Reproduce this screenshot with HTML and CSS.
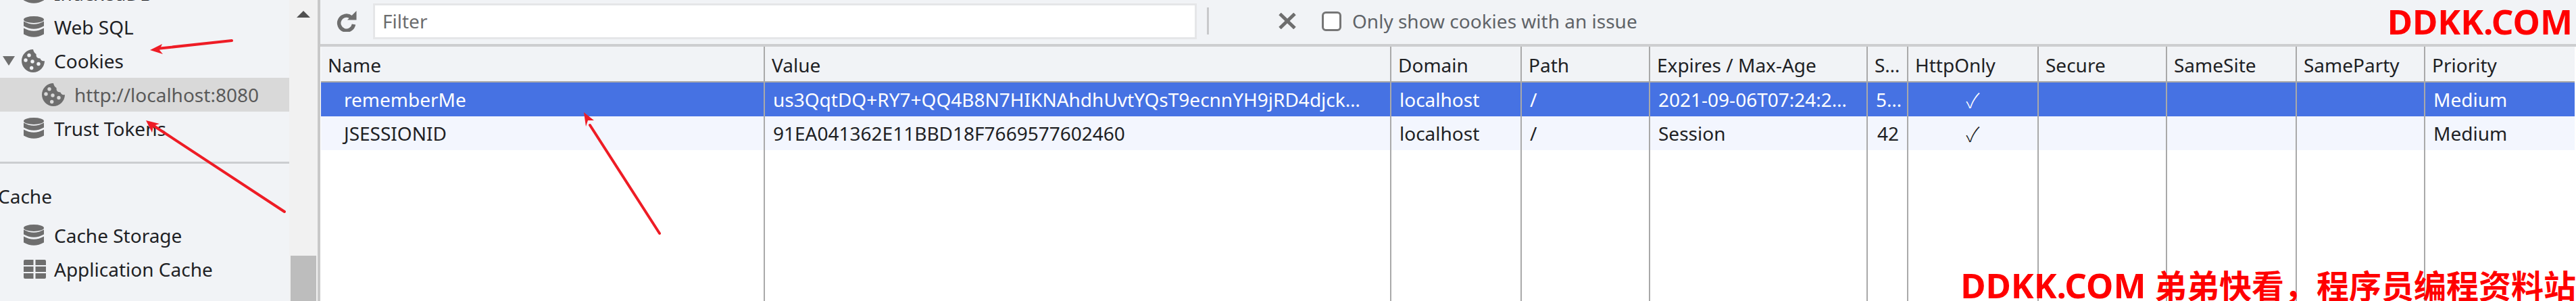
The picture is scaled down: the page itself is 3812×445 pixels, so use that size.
FILE: index.html
```html
<!DOCTYPE html>
<html lang="en">
<head>
<meta charset="utf-8">
<title>Cookies</title>
<link rel="stylesheet" href="styles.css">
</head>
<body>
<svg class="defs" width="0" height="0" aria-hidden="true">
  <symbol id="db" viewBox="0 0 30 32">
    <ellipse cx="15" cy="5" rx="15" ry="5"/>
    <path d="M0 7.500Q15 16 30 7.500V14.500Q15 23 0 14.500Z"/>
    <path d="M0 17.500Q15 26 30 17.500V26.500Q15 35 0 26.500Z"/>
  </symbol>
  <symbol id="cookie" viewBox="0 0 34 34">
    <path fill-rule="evenodd" d="M17 0A17 17 0 1 0 34 17Q29 18 27.500 13.500Q21 13.500 21.500 7Q18 5 17 0ZM11 6A2.700 2.700 0 1 1 11 11.400A2.700 2.700 0 1 1 11 6ZM6 13.300A2.700 2.700 0 1 1 6 18.700A2.700 2.700 0 1 1 6 13.300ZM16 15.300A2.700 2.700 0 1 1 16 20.700A2.700 2.700 0 1 1 16 15.300ZM25 18.800A2.700 2.700 0 1 1 25 24.200A2.700 2.700 0 1 1 25 18.800ZM14.700 24.800A2.700 2.700 0 1 1 14.700 30.200A2.700 2.700 0 1 1 14.700 24.800Z"/>
  </symbol>
  <symbol id="grid" viewBox="0 0 33 28">
    <path d="M2 0H14.500V8H0V2Q0 0 2 0ZM17.500 0H31Q33 0 33 2V8H17.500ZM0 10H14.500V18H0ZM17.500 10H33V18H17.500ZM0 20H14.500V28H2Q0 28 0 26ZM17.500 20H33V26Q33 28 31 28H17.500Z"/>
  </symbol>
</svg>

<div class="app">
  <aside class="sidebar">
    <div class="tree">
      <div class="row"><svg class="ic ic-db"><use href="#db"/></svg><span>IndexedDB</span></div>
      <div class="row"><svg class="ic ic-db"><use href="#db"/></svg><span>Web SQL</span></div>
      <div class="row row-open">
        <span class="twist"></span>
        <svg class="ic ic-cookie"><use href="#cookie"/></svg><span>Cookies</span>
      </div>
      <div class="row row-sel"><svg class="ic ic-cookie"><use href="#cookie"/></svg><span>http://localhost:8080</span></div>
      <div class="row"><svg class="ic ic-db"><use href="#db"/></svg><span>Trust Tokens</span></div>
    </div>
    <div class="divider"></div>
    <div class="section">Cache</div>
    <div class="row"><svg class="ic ic-db"><use href="#db"/></svg><span>Cache Storage</span></div>
    <div class="row"><svg class="ic ic-grid"><use href="#grid"/></svg><span>Application Cache</span></div>
  </aside>

  <div class="scrollbar">
    <span class="scroll-up"></span>
    <span class="scroll-thumb"></span>
  </div>

  <main class="main">
    <div class="toolbar">
      <svg class="reload" viewBox="0 0 30 31" aria-hidden="true">
        <path class="reload-arc" d="M21.500 9.500A11 11 0 1 0 25.500 20"/>
        <path class="reload-head" d="M29.500 0V13.500H16Z"/>
      </svg>
      <input class="filter" type="text" placeholder="Filter">
      <span class="tool-sep"></span>
      <svg class="clear" viewBox="0 0 26 24" aria-hidden="true"><path d="M2 1.500L24 22.500M24 1.500L2 22.500"/></svg>
      <label class="issue"><input type="checkbox"><span>Only show cookies with an issue</span></label>
    </div>
    <div class="table">
      <div class="tr th">
        <div class="td">Name</div><div class="td">Value</div><div class="td">Domain</div><div class="td">Path</div><div class="td">Expires / Max-Age</div><div class="td">S…</div><div class="td">HttpOnly</div><div class="td">Secure</div><div class="td">SameSite</div><div class="td">SameParty</div><div class="td">Priority</div>
      </div>
      <div class="tr selected">
        <div class="td td-name">rememberMe</div><div class="td">us3QqtDQ+RY7+QQ4B8N7HIKNAhdhUvtYQsT9ecnnYH9jRD4djck…</div><div class="td">localhost</div><div class="td">/</div><div class="td">2021-09-06T07:24:2…</div><div class="td">5…</div><div class="td td-check">✓</div><div class="td"></div><div class="td"></div><div class="td"></div><div class="td">Medium</div>
      </div>
      <div class="tr alt">
        <div class="td td-name">JSESSIONID</div><div class="td">91EA041362E11BBD18F7669577602460</div><div class="td">localhost</div><div class="td">/</div><div class="td">Session</div><div class="td td-num">42</div><div class="td td-check">✓</div><div class="td"></div><div class="td"></div><div class="td"></div><div class="td">Medium</div>
      </div>
      <div class="tr filler">
        <div class="td"></div><div class="td"></div><div class="td"></div><div class="td"></div><div class="td"></div><div class="td"></div><div class="td"></div><div class="td"></div><div class="td"></div><div class="td"></div><div class="td"></div>
      </div>
    </div>
  </main>
</div>

<svg class="arrows" viewBox="0 0 3812 445" aria-hidden="true">
  <g class="arrow-line">
    <path d="M343 60L232 72"/>
    <path d="M421 313L226 185"/>
    <path d="M976 345L873 185"/>
  </g>
  <path class="arrow-head" d="M222 74L240 65L236 74L241 80Z"/>
  <path class="arrow-head" d="M216 178L236 183L227 186L225 196Z"/>
  <path class="arrow-head" d="M864 166L879 178L870 178L867 187Z"/>
</svg>
<div class="mark mark-top">DDKK.COM</div>
<div class="mark mark-bottom"><span class="mark-latin">DDKK.COM</span> 弟弟快看，程序员编程资料站</div>
</body>
</html>
```

FILE: styles.css
```css
* { box-sizing: border-box; }
html, body { margin: 0; height: 445px; overflow: hidden; background: #fff; }
body {
  position: relative;
  font-family: "Noto Sans", "Open Sans", sans-serif;
  font-size: 28px;
  color: #202124;
}
.defs { position: absolute; }

.app { display: flex; width: 3812px; height: 445px; }

/* sidebar */
.sidebar { width: 428px; height: 445px; flex: none; background: #f1f3f6; overflow: hidden; }
.tree { margin-top: -35px; }
.row { display: flex; align-items: center; height: 50px; padding-left: 35px; white-space: nowrap; }
.row > span:last-child { margin-left: 15px; }
.row-open { position: relative; padding-left: 32px; }
.row-open > span:last-child { margin-left: 14px; }
.twist {
  position: absolute; left: 4px; top: 18px;
  border-style: solid; border-width: 14px 9.5px 0; border-color: #6e6e6e transparent transparent;
}
.row-sel { background: #d9d9d9; color: #5a5a5a; padding-left: 62px; }
.row-sel > span:last-child { margin-left: 14px; }
.ic { flex: none; fill: #6e6e6e; display: block; }
.ic-db { width: 30px; height: 32px; }
.ic-cookie { width: 34px; height: 34px; }
.ic-grid { width: 33px; height: 28px; }
.row .ic-grid + span { margin-left: 12px; }
.divider { height: 3px; margin-top: 24px; background: #cbcdd0; }
.section { height: 50px; margin-top: 23px; margin-left: -3px; line-height: 50px; }
.section + .row { margin-top: 8px; }

/* scrollbar */
.scrollbar { position: relative; width: 42px; flex: none; height: 445px; background: #f1f1f1; }
.scroll-up {
  position: absolute; left: 11px; top: 16px;
  border-style: solid; border-width: 0 10px 10px; border-color: transparent transparent #505050;
}
.scroll-thumb { position: absolute; left: 2px; top: 378px; width: 38px; height: 67px; background: #bdbdbd; }

/* main */
.main { flex: 1; min-width: 0; height: 445px; border-left: 4px solid #c8c8c8; display: flex; flex-direction: column; }
.toolbar {
  display: flex; align-items: center; height: 69px; flex: none;
  background: #f1f3f6; border-bottom: 4px solid #cdced0;
  padding-bottom: 3px;
}
.reload { width: 30px; height: 31px; margin-left: 24px; flex: none; }
.reload-arc { fill: none; stroke: #6e6e6e; stroke-width: 5.500px; }
.reload-head { fill: #6e6e6e; }
.filter {
  width: 1219px; height: 53px; margin-left: 24px; flex: none;
  border: 3px solid #e5e6e8; background: #fff; padding: 0 11px;
  font: inherit; color: #202124; outline: 0;
}
.filter::placeholder { color: #6b6c6e; opacity: 1; }
.tool-sep { width: 3px; height: 40px; margin-left: 15px; background: #c8c9cb; flex: none; }
.clear { width: 26px; height: 24px; margin-left: 103px; flex: none; fill: none; stroke: #6e6e6e; stroke-width: 5px; }
.issue { display: flex; align-items: center; margin-left: 38px; color: #5f6368; white-space: nowrap; }
.issue input {
  appearance: none; width: 29px; height: 29px; margin: 0 16px 0 0;
  background: #fff; border: 3px solid #767676; border-radius: 6px;
}

/* table */
.table { flex: 1; min-height: 0; display: flex; flex-direction: column; margin-left: 1px; width: 3335px; }
.tr {
  display: grid; flex: none;
  grid-template-columns: 657px 927px 193px 190px 322px 60px 193px 190px 192px 190px 221px;
  height: 50px;
}
.td {
  min-width: 0; padding: 0 12px; line-height: 50px; white-space: nowrap;
  border-right: 2px solid #a9a9a9;
}
.td:last-child { border-right: 0; }
.th { height: 53px; background: #f1f3f6; border-bottom: 2px solid #a9a9a9; }
.th .td { line-height: 54px; padding-left: 10px; }
.selected { background: #4672e3; color: #fff; }
.alt { background: #f3f6fe; }
.td-name { padding-left: 34px; }
.td-check { text-align: center; font-family: "Noto Sans CJK SC", "DejaVu Sans", sans-serif; font-size: 30px; font-weight: 300; }
.td-num { text-align: right; padding-right: 12px; }
.filler { flex: 1; height: auto; }
.filler .td { height: 100%; }

/* overlays */
.arrows { position: absolute; left: 0; top: 0; width: 3812px; height: 445px; pointer-events: none; }
.arrow-line { fill: none; stroke: #ee1c25; stroke-width: 4px; stroke-linecap: round; }
.arrow-head { fill: #ee1c25; }
.mark {
  position: absolute; right: 0; color: #ff0000; font-weight: 700; font-size: 48px; line-height: 56px; white-space: nowrap;
  font-family: "Noto Sans", "Noto Sans CJK SC", sans-serif;
}
.mark-top { top: 3px; right: 5px; font-size: 51px; }
.mark-bottom { top: 393px; }
.mark-latin { font-size: 51px; }
```
